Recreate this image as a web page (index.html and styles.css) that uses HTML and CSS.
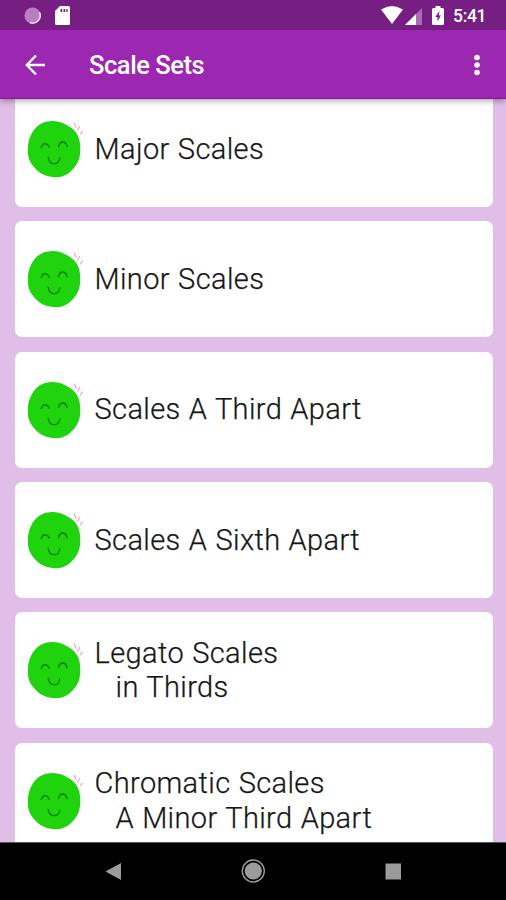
FILE: index.html
```html
<!DOCTYPE html>
<html lang="en">
<head>
<meta charset="utf-8">
<title>Scale Sets</title>
<link rel="stylesheet" href="styles.css">
</head>
<body>
<svg class="defs" aria-hidden="true">
  <symbol id="face" viewBox="0 0 60 60">
    <path d="M25.500 1C31 .8 37 3 43 7C50 11.500 53 18 53.200 27C53.600 36 52 42 46.500 48.500C41 54.500 36 57.200 29 57.200C20 57 12 54 6.500 46.500C2 41 .6 36 .8 29C1 21 3.500 13.500 8.500 8C13 3.500 18 1.200 25.500 1Z" fill="#1fd30d"/>
    <g fill="none" stroke="#087b05" stroke-width="1.300" stroke-linecap="round">
      <path d="M14.200 27.500C15.500 24.500 16.500 23.500 18 23.700C20 24 21.500 25 22.300 27.200"/>
      <path d="M31.500 26.500C32.500 22.800 34 21.800 36 22C38.500 22.300 39.700 24.500 40 26.500"/>
      <path d="M21.200 37.500C22 42 24.500 43.700 27 43.700C30.500 43.700 32.700 41.200 32.700 37.800"/>
    </g>
    <path d="M47.300 3L49 7.300M52.600 6.500L50.700 10.200M55.300 11.200L53.500 13.800" fill="none" stroke="#f4a3cf" stroke-width="1.200" stroke-linecap="round"/>
  </symbol>
</svg>
<div class="screen">
  <header>
    <div class="status">
      <svg class="sync" viewBox="0 0 18 18"><circle cx="9" cy="9" r="8.500" fill="#b67fc0"/><path d="M16.300 5.500A8 8 0 0 1 6 16.400" fill="none" stroke="#efdcf1" stroke-width="1.600"/></svg>
      <svg class="sd" viewBox="0 0 15 19"><path fill="#fff" fill-rule="evenodd" d="M5 0H13.500Q15 0 15 1.500V17.500Q15 19 13.500 19H1.500Q0 19 0 17.500V5ZM5.500 3V6H7.200V3ZM8.500 3V6H10.200V3ZM11.300 3V6H12.600V3Z"/></svg>
      <svg class="wifi" viewBox="0 0 22 18"><path fill="#fff" d="M0 3.500Q11-3.500 22 3.500L11 18Z"/></svg>
      <svg class="signal" viewBox="0 0 17 17"><path fill="#a96db4" d="M17 0V17H0Z"/><path fill="#fff" d="M11 6V17H0Z"/></svg>
      <svg class="battery" viewBox="0 0 12 19"><path fill="#fff" d="M3.500 0H8.500V2H10.500Q12 2 12 3.500V17.500Q12 19 10.500 19H1.500Q0 19 0 17.500V3.500Q0 2 1.500 2H3.500Z"/><path fill="#771e82" d="M7.500 5L3.300 11H5.500V15.500L8.800 9.500H6.800Z"/></svg>
      <span class="clock">5:41</span>
    </div>
    <div class="toolbar">
      <svg class="back" viewBox="0 0 22 22"><path d="M20 11H2M11 1.500L1.800 11L11 20.500" fill="none" stroke="#fff" stroke-width="2.400"/></svg>
      <h1>Scale Sets</h1>
      <svg class="more" viewBox="0 0 8 22"><g fill="#fff"><circle cx="4" cy="3.500" r="2.800"/><circle cx="4" cy="11" r="2.800"/><circle cx="4" cy="18.500" r="2.800"/></g></svg>
    </div>
  </header>
  <main>
    <div class="card"><svg class="face"><use href="#face"/></svg><p>Major Scales</p></div>
    <div class="card"><svg class="face"><use href="#face"/></svg><p>Minor Scales</p></div>
    <div class="card"><svg class="face"><use href="#face"/></svg><p>Scales A Third Apart</p></div>
    <div class="card"><svg class="face"><use href="#face"/></svg><p>Scales A Sixth Apart</p></div>
    <div class="card"><svg class="face"><use href="#face"/></svg><p>Legato Scales<span class="second">in Thirds</span></p></div>
    <div class="card"><svg class="face"><use href="#face"/></svg><p>Chromatic Scales<span class="second">A Minor Third Apart</span></p></div>
  </main>
  <nav>
    <svg viewBox="0 0 24 24"><path fill="#9b9b9b" d="M4.500 12.500L20 4V21Z"/></svg>
    <svg viewBox="0 0 24 24"><circle cx="12.300" cy="12" r="11" fill="none" stroke="#a0a0a0" stroke-width="1.300"/><circle cx="12.300" cy="12" r="8.600" fill="#9b9b9b"/></svg>
    <svg viewBox="0 0 24 24"><path fill="#9b9b9b" d="M4.500 4.500H20V20.500H4.500Z"/></svg>
  </nav>
</div>
</body>
</html>
```
FILE: styles.css
```css
* { box-sizing: border-box; }
body { margin: 0; font-family: Roboto, "Liberation Sans", sans-serif; }
svg { display: block; flex: none; }
.defs { position: absolute; width: 0; height: 0; }
.screen { width: 506px; height: 900px; display: flex; flex-direction: column; overflow: hidden; background: #e1bee7; }
header { z-index: 1; box-shadow: 0 2px 6px rgba(0, 0, 0, .35); }
.status { height: 30px; background: #771e82; display: flex; align-items: center; padding: 0 20px 0 24px; }
.sync { width: 17px; height: 17px; }
.sd { width: 15px; height: 19px; margin-left: 14px; }
.wifi { width: 22px; height: 18px; margin-left: auto; }
.signal { width: 17px; height: 17px; margin-left: 2px; margin-top: 2px; }
.battery { width: 12px; height: 19px; margin-left: 10px; }
.clock { width: 33px; margin: 2px 0 0 9px; color: #fff; font-size: 17.5px; font-weight: 500; line-height: 20px; letter-spacing: -.3px; white-space: nowrap; }
.toolbar { height: 69px; background: #9c27b0; border-bottom: 1px solid #8b0fa0; display: flex; align-items: center; padding: 0 25px; }
.back { width: 22px; height: 22px; margin-top: 1px; }
h1 { margin: 1px 0 0 42px; color: #fff; font-size: 25.5px; font-weight: 500; line-height: 30px; letter-spacing: -.45px; }
.more { width: 8px; height: 22px; margin-left: auto; margin-top: 1px; }
main { flex: 1; min-height: 0; overflow: hidden; display: flex; flex-direction: column; gap: 14.4px; padding: 0 13.5px 0 15px; }
.card { flex: 0 0 116px; background: #fff; border-radius: 7px; display: flex; align-items: center; padding-left: 12px; }
.card:first-child { margin-top: -8.2px; }
.face { width: 60px; height: 60px; margin-top: 2px; }
p { margin: 0 0 0 7.5px; color: #161616; font-size: 29px; font-weight: 300; line-height: 34.4px; letter-spacing: .38px; word-spacing: .7px; -webkit-text-stroke: .25px #161616; white-space: nowrap; }
.second { display: block; padding-left: 21px; }
nav { height: 58px; background: #000; border-top: 1px solid #555; display: flex; align-items: center; justify-content: center; gap: 116px; padding-bottom: 2px; }
nav svg { width: 24px; height: 24px; }
```
